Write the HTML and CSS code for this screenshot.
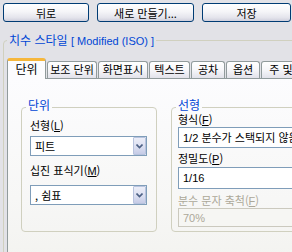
FILE: index.html
```html
<!DOCTYPE html>
<html lang="ko">
<head>
<meta charset="utf-8">
<link rel="stylesheet" href="styles.css">
</head>
<body>
<div class="toolbar">
  <button class="btn btn-back">뒤로</button>
  <button class="btn btn-new">새로 만들기...</button>
  <button class="btn btn-save">저장</button>
</div>
<fieldset class="frame">
  <legend class="frame-title">치수 스타일 <span class="latin">[ Modified (ISO) ]</span></legend>
  <div class="tabs">
    <div class="tab active t1">단위</div>
    <div class="tab t2">보조 단위</div>
    <div class="tab t3">화면표시</div>
    <div class="tab t4">텍스트</div>
    <div class="tab t5">공차</div>
    <div class="tab t6">옵션</div>
    <div class="tab t7">주 및</div>
  </div>
  <div class="panel">
    <fieldset class="group group-left">
      <legend class="group-title">단위</legend>
      <div class="label lbl-a">선형(<u>L</u>)</div>
      <div class="combo combo-a"><span class="combo-text">피트</span><span class="drop"><svg width="7" height="5" viewBox="0 0 7 5"><path d="M0.5 0.5 L3.5 3.5 L6.5 0.5" fill="none" stroke="#4d6185" stroke-width="1.6"/></svg></span></div>
      <div class="label lbl-b">십진 표식기(<u>M</u>)</div>
      <div class="combo combo-b"><span class="combo-text">, 쉼표</span><span class="drop"><svg width="7" height="5" viewBox="0 0 7 5"><path d="M0.5 0.5 L3.5 3.5 L6.5 0.5" fill="none" stroke="#4d6185" stroke-width="1.6"/></svg></span></div>
    </fieldset>
    <fieldset class="group group-right">
      <legend class="group-title">선형</legend>
      <div class="label lbl-c">형식(<u>F</u>)</div>
      <div class="field field-a"><span class="num">1/2</span> 분수가 스택되지 않음</div>
      <div class="label lbl-d">정밀도(<u>P</u>)</div>
      <div class="field field-b"><span class="num">1/16</span></div>
      <div class="label lbl-e disabled">분수 문자 축척(<u>F</u>)</div>
      <div class="field field-c disabled-field"><span class="num">70%</span></div>
    </fieldset>
  </div>
</fieldset>
</body>
</html>
```

FILE: styles.css
```css
* { box-sizing: border-box; }
html, body { margin: 0; padding: 0; }
body {
  width: 292px;
  height: 252px;
  overflow: hidden;
  background: #e2e2e7;
  font-family: "Noto Sans CJK KR", "Noto Sans", sans-serif;
  font-size: 11px;
  color: #000;
}
.toolbar {
  display: flex;
  gap: 8px;
  padding: 3px 0 0 3px;
}
.btn {
  height: 19px;
  padding: 0;
  border: 1px solid #003c74;
  border-radius: 3px;
  background: linear-gradient(#ffffff 0%, #f5f5f8 45%, #e4e4ec 80%, #cfcfdc 100%);
  font-family: "Noto Sans CJK KR", sans-serif;
  font-size: 11px;
  line-height: 16px;
  color: #000;
}
.btn-back { width: 86px; }
.btn-new { width: 97px; }
.btn-save { width: 89px; }

.frame {
  margin: 11px 0 0 3px;
  width: 330px;
  min-width: 0;
  padding: 0 0 0 3px;
  border: 1px solid #d0d0bf;
  border-radius: 4px;
}
.frame-title {
  padding: 0 2px;
  color: #0046d5;
  font-size: 12px;
  line-height: 14px;
}
.frame-title .latin {
  font-family: "Liberation Sans", Arial, sans-serif;
  font-size: 11px;
}
.tabs {
  display: flex;
  align-items: flex-end;
  gap: 1px;
  height: 20px;
  margin-top: 10px;
}
.tab {
  height: 17px;
  border: 1px solid #919b9c;
  border-bottom: none;
  border-radius: 3px 3px 0 0;
  background: linear-gradient(#ffffff 0%, #f6f6f9 50%, #e2e2ea 100%);
  text-align: center;
  line-height: 15px;
  font-size: 11px;
  white-space: nowrap;
  overflow: hidden;
}
.tab.active {
  height: 21px;
  margin-bottom: -1px;
  position: relative;
  z-index: 1;
  border-top: 3px solid #f6b73c;
  background: #fcfcfe;
  line-height: 16px;
  font-size: 12px;
}
.t1 { width: 39px; }
.t2 { width: 50px; }
.t3 { width: 50px; }
.t4 { width: 41px; }
.t5 { width: 34px; }
.t6 { width: 34px; }
.t7 { width: 40px; }

.panel {
  display: flex;
  align-items: flex-start;
  gap: 14px;
  height: 200px;
  padding: 20px 0 0 13px;
  border: 1px solid #919b9c;
  border-right: none;
  background: linear-gradient(#fcfcfe 0%, #f7f7f6 60%, #f2f2ee 100%);
}
.group {
  margin: 0;
  min-width: 0;
  border: 1px solid #d0d0bf;
  border-radius: 4px;
}
.group-left {
  width: 136px;
  height: 133px;
  padding: 0 8px 0 8px;
}
.group-right {
  width: 140px;
  height: 133px;
  padding: 0 0 0 6px;
}
.group-title {
  color: #0046d5;
  font-size: 12px;
  line-height: 12px;
  padding: 0 2px 4px 2px;
}
.group-left .group-title { margin-left: -4px; }
.group-right .group-title { margin-left: -2px; }

.label {
  line-height: 14px;
  font-size: 11px;
  white-space: nowrap;
}
.label u { font-family: "Liberation Sans", sans-serif; }
.lbl-a { margin-top: 3px; }
.lbl-b { margin-top: 7px; }
.lbl-c { margin-top: -2px; line-height: 12px; }
.lbl-d { margin-top: 3px; }
.lbl-e { margin-top: 4px; }
.disabled { color: #aca899; }

.combo {
  display: flex;
  align-items: center;
  justify-content: space-between;
  width: 117px;
  height: 20px;
  border: 1px solid #7f9db9;
  background: #fff;
}
.combo-a { margin-top: 3px; }
.combo-b { margin-top: 7px; }
.combo-text {
  padding-left: 4px;
  font-size: 11px;
  line-height: 16px;
}
.drop {
  display: flex;
  align-items: center;
  justify-content: center;
  width: 13px;
  height: 18px;
  border: 1px solid #b8c3de;
  border-radius: 1px;
  background: linear-gradient(#eceef8 0%, #d9ddf0 60%, #c5cbe6 100%);
}
.field {
  width: 130px;
  height: 21px;
  border: 1px solid #7f9db9;
  background: #fff;
  padding-left: 4px;
  line-height: 19px;
  font-size: 11px;
  white-space: nowrap;
  overflow: hidden;
}
.field-a { margin-top: 1px; }
.field-b { margin-top: 1px; height: 22px; }
.field-c { margin-top: 0; height: 19px; line-height: 17px; }
.num {
  font-family: "Liberation Sans", Arial, sans-serif;
  font-size: 11px;
}
.disabled-field {
  border-color: #cbc9be;
  background: #f6f6f3;
  color: #aca899;
}
```
